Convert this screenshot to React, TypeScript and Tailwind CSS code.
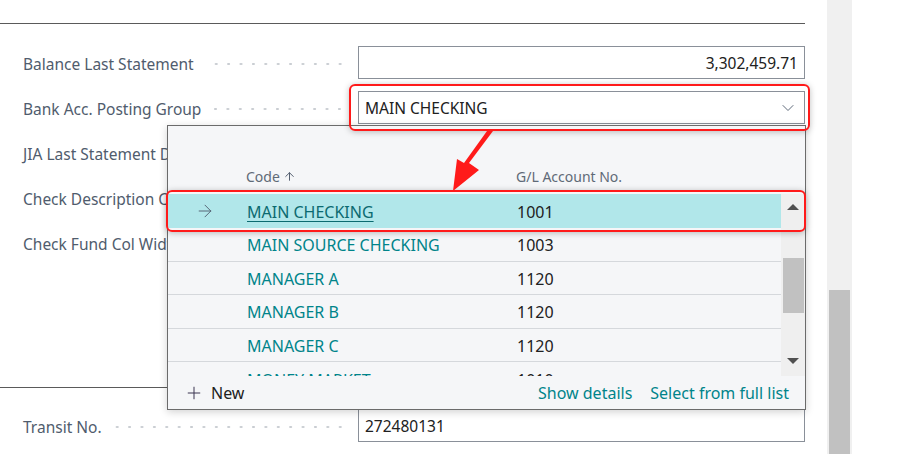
import { ChevronDown, ArrowRight, Plus, ArrowUp } from "lucide-react";

const FONT = { fontFamily: '"Noto Sans", "Open Sans", sans-serif' };

function Leader() {
  return (
    <div className="flex-1 ml-[12px] mt-[2px] h-[4px] bg-[radial-gradient(circle,#c9cdd2_1px,transparent_1.5px)] bg-[length:12.4px_4px] bg-repeat-x bg-right" />
  );
}

function FieldRow({ label, value, right, select }: { label: string; value?: string; right?: boolean; select?: boolean }) {
  return (
    <div className="flex items-center h-[33px]">
      <div className="w-[358px] pl-[23px] pr-[12px] flex items-center">
        <span className="mt-[4px] text-[15.5px] text-[#505c6d] whitespace-nowrap">{label}</span>
        <Leader />
      </div>
      <div
        className={`w-[447px] h-[33px] border border-[#8a9099] bg-white flex items-center px-[6px] text-[15.5px] text-[#212121] ${
          right ? "justify-end" : "justify-between"
        }`}
      >
        <span className="mt-[3px]">{value}</span>
        {select && <ChevronDown size={20} strokeWidth={1.1} className="text-[#505c6d]" />}
      </div>
    </div>
  );
}

const rows = [
  { code: "MAIN SOURCE CHECKING", gl: "1003" },
  { code: "MANAGER A", gl: "1120" },
  { code: "MANAGER B", gl: "1120" },
  { code: "MANAGER C", gl: "1120" },
  { code: "MONEY MARKET", gl: "1010" },
];

function Lookup() {
  return (
    <div className="absolute left-[167px] top-[125px] w-[639px] h-[285px] bg-[#f5f6f8] border border-[#6b6b6b] shadow-[0_2px_8px_rgba(0,0,0,0.18)] flex flex-col">
      <div className="h-[68px] flex items-end pb-[7px] text-[14px] text-[#5f6a77]">
        <div className="w-[78px]" />
        <div className="w-[270px] flex items-center gap-[3px]">
          Code
          <ArrowUp size={13} strokeWidth={1.8} className="text-[#505c6d]" />
        </div>
        <div>G/L Account No.</div>
      </div>
      <div className="h-[182px] flex overflow-hidden">
        <div className="flex-1 flex flex-col">
          <div className="h-[34px] shrink-0 bg-[#b1e7ea] flex items-center text-[16px]">
            <div className="w-[79px] pl-[27px]">
              <ArrowRight size={20} strokeWidth={1.1} className="text-[#505c6d]" />
            </div>
            <div className="w-[270px] mt-[2px] text-[#0b6a70] underline underline-offset-[3px]">MAIN CHECKING</div>
            <div className="mt-[2px] text-[#212121]">1001</div>
          </div>
          {rows.map((r, i) => (
            <div
              key={r.code}
              className={`h-[33.5px] shrink-0 flex items-center text-[16px] ${i < 4 ? "border-b border-[#d5d8dc]" : ""}`}
            >
              <div className="w-[79px]" />
              <div className="w-[270px] mt-[2px] text-[#00848a]">{r.code}</div>
              <div className="mt-[2px] text-[#212121]">{r.gl}</div>
            </div>
          ))}
        </div>
        <div className="w-[24px] bg-[#efefef] flex flex-col items-center">
          <div className="h-[24px] flex items-center justify-center pt-[2px]">
            <div className="w-0 h-0 border-l-[6px] border-r-[6px] border-b-[6px] border-l-transparent border-r-transparent border-b-[#505050]" />
          </div>
          <div className="h-[40px]" />
          <div className="w-[21px] h-[55px] bg-[#c1c1c1]" />
          <div className="flex-1" />
          <div className="h-[26px] flex items-center justify-center pb-[4px]">
            <div className="w-0 h-0 border-l-[6px] border-r-[6px] border-t-[6px] border-l-transparent border-r-transparent border-t-[#505050]" />
          </div>
        </div>
      </div>
      <div className="flex-1 flex items-center px-[16px] text-[16px]">
        <Plus size={20} strokeWidth={1.2} className="text-[#3a3550]" />
        <span className="ml-[7px] text-[#212121]">New</span>
        <div className="flex-1" />
        <span className="text-[#00848a]">Show details</span>
        <span className="ml-[18px] text-[#00848a]">Select from full list</span>
      </div>
    </div>
  );
}

export default function App() {
  return (
    <div className="relative w-[912px] h-[454px] overflow-hidden bg-white flex" style={FONT}>
      <div className="w-[827px] flex flex-col">
        <div className="h-[23px]" />
        <div className="w-[805px] border-t border-[#5a5a5a]" />
        <div className="flex flex-col gap-[12px] mt-[22px]">
          <FieldRow label="Balance Last Statement" value="3,302,459.71" right />
          <FieldRow label="Bank Acc. Posting Group" value="MAIN CHECKING" select />
          <FieldRow label="JIA Last Statement Date" />
          <FieldRow label="Check Description Column" />
          <FieldRow label="Check Fund Col Width" />
        </div>
        <div className="h-[128px]" />
        <div className="w-[805px] border-t border-[#5a5a5a]" />
        <div className="mt-[21px]">
          <FieldRow label="Transit No." value="272480131" />
        </div>
      </div>
      <div className="w-[25px] h-full bg-[#f0f0f0] flex flex-col items-center">
        <div className="h-[290px]" />
        <div className="w-[21px] flex-1 bg-[#c1c1c1]" />
      </div>

      <Lookup />

      <div className="absolute left-[349px] top-[84px] w-[461px] h-[47px] border-2 border-[#ff1a1a] rounded-[6px] shadow-[0_1px_6px_rgba(0,0,0,0.25)] pointer-events-none" />
      <div className="absolute left-[166px] top-[190px] w-[640px] h-[42px] border-2 border-[#ff1a1a] rounded-[6px] shadow-[0_1px_6px_rgba(0,0,0,0.25)] pointer-events-none" />
      <svg className="absolute left-0 top-0 pointer-events-none" width="912" height="454">
        <polygon points="487,131 493,131 469,163 479,170 453,191 457,159 464,163" fill="#ff1a1a" />
      </svg>
    </div>
  );
}
